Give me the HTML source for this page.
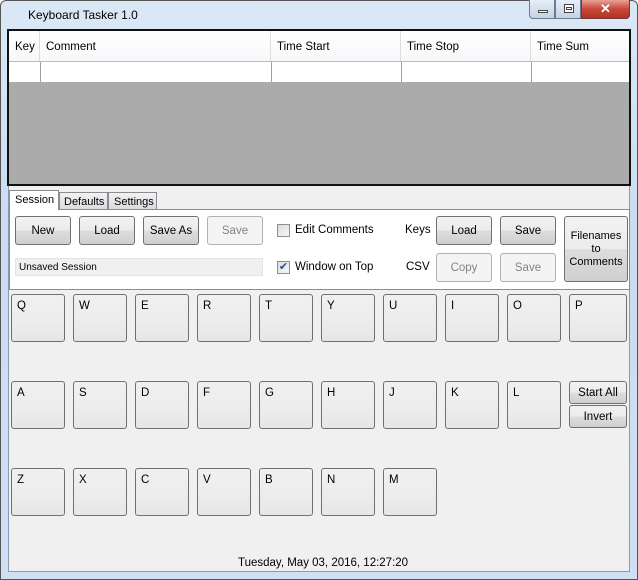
<!DOCTYPE html>
<html><head><style>
*{box-sizing:border-box;margin:0;padding:0}
body{width:638px;height:580px;overflow:hidden;font-family:"Liberation Sans",sans-serif;font-size:11.5px;color:#000;background:#fff}
.a{position:absolute}
.frame{left:0;top:0;width:638px;height:580px;background:linear-gradient(180deg,#dbe8f6 0%,#c9dcf0 40%,#cfe0f3 100%);border:1px solid #555;border-radius:6px 6px 0 0}
.client{left:8px;top:29px;width:622px;height:543px;background:#f0f0f0;border:1px solid #8a9bb0}
.btn{position:absolute;border:1px solid #707070;border-radius:3px;background:linear-gradient(#f2f2f2 0%,#ebebeb 50%,#dddddd 51%,#cfcfcf 100%);text-align:center;font-size:11.5px}
.dis{border-color:#adb2b5;background:#f4f4f4;color:#838383}
.key{position:absolute;width:54px;height:48px;border:1px solid #707070;border-radius:3px;background:linear-gradient(#f0f0f0 0%,#ececec 60%,#e6e6e6 100%);padding:5px 0 0 5px;font-size:11.5px}
.hd{position:absolute;top:0;height:30px;line-height:32px;padding-left:6px;border-right:1px solid #ddd;background:linear-gradient(#fff,#f7f8fa)}
.cb{position:absolute;width:13px;height:13px;border:1px solid #8e8f8f;background:linear-gradient(135deg,#dcdcdc,#f6f6f6)}
</style></head><body>
<div class="a frame"></div>
<div class="a" style="left:28px;top:8px;font-size:12px">Keyboard Tasker 1.0</div>
<div class="a" style="left:529px;top:0;width:26px;height:19px;border:1px solid #6b7a8f;border-top:none;border-radius:0 0 0 4px;background:linear-gradient(#e6eef8,#c3d3e6)"><div class="a" style="left:8px;top:10px;width:10px;height:3px;border:1px solid #444;background:#fff"></div></div>
<div class="a" style="left:555px;top:0;width:26px;height:19px;border:1px solid #6b7a8f;border-top:none;background:linear-gradient(#e6eef8,#c3d3e6)"><div class="a" style="left:8px;top:4px;width:10px;height:9px;border:1px solid #444;background:#fff"><div class="a" style="left:1px;top:2px;width:6px;height:3px;border:1px solid #444"></div></div></div>
<div class="a" style="left:581px;top:0;width:49px;height:19px;border:1px solid #6b3b35;border-top:none;border-radius:0 0 4px 0;background:linear-gradient(#e8a294,#c8473a 50%,#b53223);color:#fff;font-weight:bold;text-align:center;font-size:13px;line-height:17px">✕</div>
<div class="a client"></div>
<div class="a" style="left:7px;top:29px;width:624px;height:157px;border:2px solid #111;background:#ababab">
 <div class="a" style="left:0;top:0;width:620px;height:51px;background:#fff"></div>
 <div class="hd" style="left:0;width:31px">Key</div>
 <div class="hd" style="left:31px;width:231px">Comment</div>
 <div class="hd" style="left:262px;width:130px">Time Start</div>
 <div class="hd" style="left:392px;width:130px">Time Stop</div>
 <div class="hd" style="left:522px;width:98px;border-right:none">Time Sum</div>
 <div class="a" style="left:0;top:30px;width:620px;height:1px;background:#bbb"></div>
 <div class="a" style="left:31px;top:31px;width:1px;height:20px;background:#a0a0a0"></div>
 <div class="a" style="left:262px;top:31px;width:1px;height:20px;background:#a0a0a0"></div>
 <div class="a" style="left:392px;top:31px;width:1px;height:20px;background:#a0a0a0"></div>
 <div class="a" style="left:522px;top:31px;width:1px;height:20px;background:#a0a0a0"></div>
</div>
<div class="a" style="left:9px;top:209px;width:621px;height:81px;background:#fff;border:1px solid #898c95"></div>
<div class="a" style="left:9px;top:190px;width:50px;height:20px;background:#fff;border:1px solid #898c95;border-bottom:none;padding:3px 0 0 5px;font-size:11px">Session</div>
<div class="a" style="left:59px;top:192px;width:49px;height:18px;background:linear-gradient(#f2f2f2,#dcdcdc);border:1px solid #898c95;padding:3px 0 0 4px;font-size:11px">Defaults</div>
<div class="a" style="left:108px;top:192px;width:49px;height:18px;background:linear-gradient(#f2f2f2,#dcdcdc);border:1px solid #898c95;padding:3px 0 0 5px;font-size:11px">Settings</div>
<div class="btn" style="left:15px;top:216px;width:56px;height:29px;line-height:28px">New</div>
<div class="btn" style="left:79px;top:216px;width:56px;height:29px;line-height:28px">Load</div>
<div class="btn" style="left:143px;top:216px;width:56px;height:29px;line-height:28px">Save As</div>
<div class="btn dis" style="left:207px;top:216px;width:56px;height:29px;line-height:28px">Save</div>
<div class="a" style="left:15px;top:258px;width:248px;height:18px;background:#f0f0f0;border:1px solid #e3e3e3;font-size:10px;padding:3px 0 0 3px">Unsaved Session</div>
<div class="cb" style="left:277px;top:224px"></div>
<div class="a" style="left:295px;top:224px">Edit Comments</div>
<div class="cb" style="left:277px;top:261px;color:#2a4f9c;font-size:11px;line-height:11px;text-align:center">✔</div>
<div class="a" style="left:295px;top:261px">Window on Top</div>
<div class="a" style="left:405px;top:224px">Keys</div>
<div class="a" style="left:406px;top:261px">CSV</div>
<div class="btn" style="left:436px;top:216px;width:56px;height:29px;line-height:28px">Load</div>
<div class="btn" style="left:500px;top:216px;width:56px;height:29px;line-height:28px">Save</div>
<div class="btn dis" style="left:436px;top:253px;width:56px;height:29px;line-height:28px">Copy</div>
<div class="btn dis" style="left:500px;top:253px;width:56px;height:29px;line-height:28px">Save</div>
<div class="btn" style="left:564px;top:216px;width:64px;height:66px;padding-top:13px;line-height:13px;font-size:11px">Filenames<br>to<br>Comments</div>
<div class="key" style="left:11px;top:294px">Q</div>
<div class="key" style="left:73px;top:294px">W</div>
<div class="key" style="left:135px;top:294px">E</div>
<div class="key" style="left:197px;top:294px">R</div>
<div class="key" style="left:259px;top:294px">T</div>
<div class="key" style="left:321px;top:294px">Y</div>
<div class="key" style="left:383px;top:294px">U</div>
<div class="key" style="left:445px;top:294px">I</div>
<div class="key" style="left:507px;top:294px">O</div>
<div class="key" style="left:569px;top:294px;width:58px">P</div>
<div class="key" style="left:11px;top:381px">A</div>
<div class="key" style="left:73px;top:381px">S</div>
<div class="key" style="left:135px;top:381px">D</div>
<div class="key" style="left:197px;top:381px">F</div>
<div class="key" style="left:259px;top:381px">G</div>
<div class="key" style="left:321px;top:381px">H</div>
<div class="key" style="left:383px;top:381px">J</div>
<div class="key" style="left:445px;top:381px">K</div>
<div class="key" style="left:507px;top:381px">L</div>
<div class="btn" style="left:569px;top:381px;width:58px;height:23px;line-height:22px">Start All</div>
<div class="btn" style="left:569px;top:405px;width:58px;height:23px;line-height:22px">Invert</div>
<div class="key" style="left:11px;top:468px">Z</div>
<div class="key" style="left:73px;top:468px">X</div>
<div class="key" style="left:135px;top:468px">C</div>
<div class="key" style="left:197px;top:468px">V</div>
<div class="key" style="left:259px;top:468px">B</div>
<div class="key" style="left:321px;top:468px">N</div>
<div class="key" style="left:383px;top:468px">M</div>
<div class="a" style="left:238px;top:557px">Tuesday, May 03, 2016, 12:27:20</div>
</body></html>
